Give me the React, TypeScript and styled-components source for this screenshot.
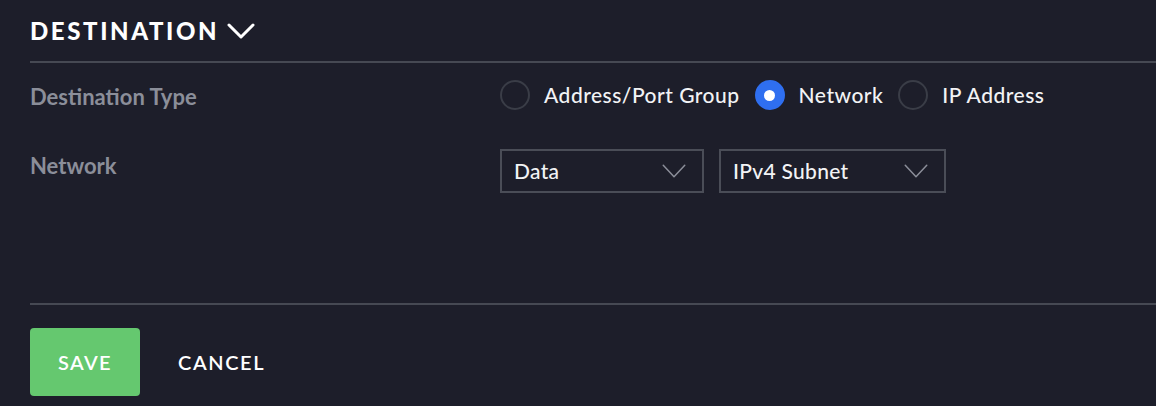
import React, { useState } from 'react';
import styled, { createGlobalStyle } from 'styled-components';

const GlobalStyle = createGlobalStyle`
  html, body {
    margin: 0;
    padding: 0;
    background-color: #1d1e2a;
  }
  * {
    box-sizing: border-box;
  }
`;

const Page = styled.div`
  width: 1156px;
  height: 406px;
  padding-left: 30px;
  background-color: #1d1e2a;
  font-family: 'Lato', 'Noto Sans', sans-serif;
  color: #ffffff;
  overflow: hidden;
`;

const Header = styled.div`
  height: 63px;
  display: flex;
  align-items: center;
  gap: 8px;
  border-bottom: 2px solid #464953;
`;

const Title = styled.h2`
  margin: 0;
  font-size: 24px;
  line-height: 30px;
  font-weight: 900;
  letter-spacing: 2.6px;
  color: #ffffff;
`;

const Form = styled.div`
  height: 242px;
  padding-top: 17px;
  display: flex;
  flex-direction: column;
  gap: 37px;
  border-bottom: 2px solid #464953;
`;

const Row = styled.div`
  display: flex;
  align-items: flex-start;
`;

const Label = styled.div`
  width: 470px;
  margin-top: 2px;
  font-size: 22px;
  line-height: 30px;
  font-weight: 700;
  color: #8b8e99;
`;

const RadioGroup = styled.div`
  display: flex;
  align-items: center;
  gap: 15px;
  height: 30px;
`;

const RadioOption = styled.label`
  display: flex;
  align-items: center;
  gap: 14px;
  font-size: 21px;
  line-height: 30px;
  font-weight: 500;
  letter-spacing: 0.5px;
  color: #f2f3f5;
  cursor: pointer;
`;

const RadioCircle = styled.span<{ $checked: boolean }>`
  width: 30px;
  height: 30px;
  border-radius: 50%;
  border: 2px solid ${(p) => (p.$checked ? '#2f6ff0' : '#3a3d47')};
  background-color: ${(p) => (p.$checked ? '#2f6ff0' : 'transparent')};
  display: flex;
  align-items: center;
  justify-content: center;

  &::after {
    content: '';
    width: 11px;
    height: 11px;
    border-radius: 50%;
    background-color: #ffffff;
    display: ${(p) => (p.$checked ? 'block' : 'none')};
  }
`;

const Selects = styled.div`
  display: flex;
  gap: 15px;
`;

const Select = styled.div<{ $width: number }>`
  width: ${(p) => p.$width}px;
  height: 44px;
  border: 2px solid #4a4d57;
  display: flex;
  align-items: center;
  justify-content: space-between;
  padding: 0 16px 1px 12px;
  font-size: 21px;
  font-weight: 500;
  letter-spacing: 0.3px;
  color: #f2f3f5;
`;

const Footer = styled.div`
  padding-top: 23px;
  display: flex;
  align-items: center;
  gap: 38px;
`;

const SaveButton = styled.button`
  width: 110px;
  height: 68px;
  border: none;
  border-radius: 4px;
  background-color: #65c86f;
  color: #ffffff;
  font-family: inherit;
  font-size: 20px;
  font-weight: 600;
  letter-spacing: 1.4px;
`;

const CancelButton = styled.button`
  border: none;
  background: none;
  padding: 0;
  color: #ffffff;
  font-family: inherit;
  font-size: 20px;
  font-weight: 600;
  letter-spacing: 1.6px;
`;

const Chevron = ({ w, h, stroke, color }: { w: number; h: number; stroke: number; color: string }) => (
  <svg width={w} height={h} viewBox={`0 0 ${w} ${h}`} fill="none">
    <path
      d={`M${stroke / 2 + 0.5} ${stroke / 2 + 0.5} L${w / 2} ${h - stroke / 2 - 0.5} L${w - stroke / 2 - 0.5} ${stroke / 2 + 0.5}`}
      stroke={color}
      strokeWidth={stroke}
      strokeLinecap="round"
      strokeLinejoin="round"
    />
  </svg>
);

const options = ['Address/Port Group', 'Network', 'IP Address'];

export default function App() {
  const [type, setType] = useState('Network');

  return (
    <Page>
      <GlobalStyle />
      <Header>
        <Title>DESTINATION</Title>
        <Chevron w={28} h={16} stroke={3} color="#ffffff" />
      </Header>

      <Form>
        <Row>
          <Label>Destination Type</Label>
          <RadioGroup>
            {options.map((o) => (
              <RadioOption key={o} onClick={() => setType(o)}>
                <RadioCircle $checked={type === o} />
                {o}
              </RadioOption>
            ))}
          </RadioGroup>
        </Row>
        <Row>
          <Label>Network</Label>
          <Selects>
            <Select $width={204}>
              Data
              <Chevron w={24} h={14} stroke={1.5} color="#8b8e99" />
            </Select>
            <Select $width={227}>
              IPv4 Subnet
              <Chevron w={24} h={14} stroke={1.5} color="#8b8e99" />
            </Select>
          </Selects>
        </Row>
      </Form>

      <Footer>
        <SaveButton>SAVE</SaveButton>
        <CancelButton>CANCEL</CancelButton>
      </Footer>
    </Page>
  );
}
